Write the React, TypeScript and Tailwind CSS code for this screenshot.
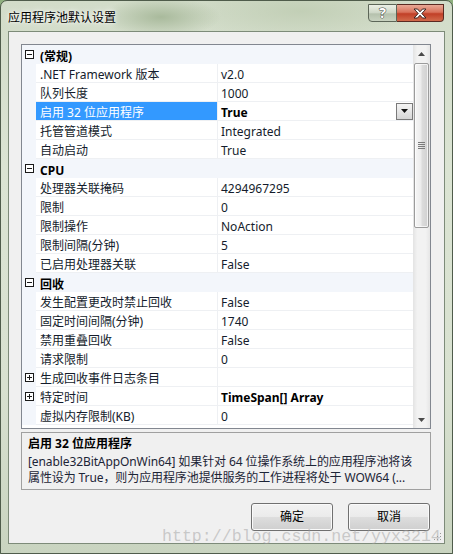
import React from "react";

type Row =
  | { type: "cat"; label: string }
  | { type: "prop"; name: string; value: string; selected?: boolean; bold?: boolean; expand?: boolean };

const rows: Row[] = [
  { type: "cat", label: "(常规)" },
  { type: "prop", name: ".NET Framework 版本", value: "v2.0" },
  { type: "prop", name: "队列长度", value: "1000" },
  { type: "prop", name: "启用 32 位应用程序", value: "True", selected: true, bold: true },
  { type: "prop", name: "托管管道模式", value: "Integrated" },
  { type: "prop", name: "自动启动", value: "True" },
  { type: "cat", label: "CPU" },
  { type: "prop", name: "处理器关联掩码", value: "4294967295" },
  { type: "prop", name: "限制", value: "0" },
  { type: "prop", name: "限制操作", value: "NoAction" },
  { type: "prop", name: "限制间隔(分钟)", value: "5" },
  { type: "prop", name: "已启用处理器关联", value: "False" },
  { type: "cat", label: "回收" },
  { type: "prop", name: "发生配置更改时禁止回收", value: "False" },
  { type: "prop", name: "固定时间间隔(分钟)", value: "1740" },
  { type: "prop", name: "禁用重叠回收", value: "False" },
  { type: "prop", name: "请求限制", value: "0" },
  { type: "prop", name: "生成回收事件日志条目", value: "", expand: true },
  { type: "prop", name: "特定时间", value: "TimeSpan[] Array", expand: true, bold: true },
  { type: "prop", name: "虚拟内存限制(KB)", value: "0" },
];

function Box({ plus }: { plus?: boolean }) {
  return (
    <svg width="9" height="9" viewBox="0 0 9 9" className="block">
      <rect x="0.5" y="0.5" width="8" height="8" fill="white" stroke="#1a1a1a" />
      <line x1="2" y1="4.5" x2="7" y2="4.5" stroke="#1a1a1a" />
      {plus && <line x1="4.5" y1="2" x2="4.5" y2="7" stroke="#1a1a1a" />}
    </svg>
  );
}

function DropButton() {
  return (
    <div className="ml-auto w-[17px] h-[17px] border border-[#7a7a7a] bg-[linear-gradient(180deg,#f4f4f4_0%,#e6e6e6_50%,#d6d6d6_100%)] flex items-center justify-center">
      <svg width="7" height="4" viewBox="0 0 7 4">
        <polygon points="0,0 7,0 3.5,4" fill="#111" />
      </svg>
    </div>
  );
}

function Scrollbar() {
  return (
    <div className="w-[17px] flex flex-col bg-[linear-gradient(90deg,#e3e3e3_0%,#f2f2f2_25%,#f2f2f2_75%,#e6e6e6_100%)]">
      <div className="h-[17px] flex items-center justify-center">
        <svg width="7" height="4" viewBox="0 0 7 4">
          <polygon points="0,4 7,4 3.5,0" fill="#4a4a4a" />
        </svg>
      </div>
      <div className="mt-[1px] mx-[1px] h-[165px] rounded-[2px] border border-[#9b9b9b] bg-[linear-gradient(90deg,#f6f6f6_0%,#ececec_45%,#dcdcdc_55%,#d0d0d0_100%)] shadow-[inset_0_0_0_1px_rgba(255,255,255,0.7)] flex flex-col items-center justify-center gap-[1px]">
        <div className="w-[7px] h-[1px] bg-[#7b7b7b]" />
        <div className="w-[7px] h-[1px] bg-[#7b7b7b]" />
        <div className="w-[7px] h-[1px] bg-[#7b7b7b]" />
        <div className="w-[7px] h-[1px] bg-[#7b7b7b]" />
      </div>
      <div className="flex-1" />
      <div className="h-[17px] flex items-center justify-center">
        <svg width="7" height="4" viewBox="0 0 7 4">
          <polygon points="0,0 7,0 3.5,4" fill="#4a4a4a" />
        </svg>
      </div>
    </div>
  );
}

function GridRow({ row }: { row: Row }) {
  if (row.type === "cat") {
    return (
      <div className="h-[19px] flex bg-[#f3f6fb]">
        <div className="w-[14px] flex items-center pl-[3px]">
          <Box />
        </div>
        <div className="pl-[4px] font-bold leading-[19px] text-black relative top-[2px]">{row.label}</div>
      </div>
    );
  }
  return (
    <div className="h-[19px] flex">
      <div className="w-[14px] bg-[#f3f6fb] flex items-center pl-[3px]">{row.expand && <Box plus />}</div>
      <div
        className={
          "w-[181px] border-b border-[#eef0f3] pl-[4px] whitespace-nowrap overflow-hidden " +
          (row.selected ? "bg-[#3399ff] text-white" : "text-[#141c2c]")
        }
      >
        <span className="block leading-[18px] relative top-[2px]">{row.name}</span>
      </div>
      <div className="w-[1px] bg-[#eef0f3]" />
      <div className="w-[195px] border-b border-[#eef0f3] pl-[3px] flex items-center whitespace-nowrap">
        <span
          className={
            (row.bold ? "font-bold text-black" : "text-[#141c2c]") + " leading-[18px] relative top-[2px]"
          }
        >
          {row.value}
        </span>
        {row.selected && <DropButton />}
      </div>
    </div>
  );
}

function Button({ label }: { label: string }) {
  return (
    <div className="w-[82px] h-[28px] rounded-[3px] border border-[#707070] bg-[linear-gradient(180deg,#f2f2f2_0%,#ebebeb_48%,#dddddd_52%,#cfcfcf_100%)] shadow-[inset_0_0_0_1px_#fafafa] flex items-center justify-center text-[12px] text-black">
      {label}
    </div>
  );
}

export default function App() {
  return (
    <div className="w-[453px] h-[554px] relative overflow-hidden bg-[#8fb07f] font-['Noto_Sans','Noto_Sans_CJK_SC',sans-serif] text-[12px]">
      <div className="w-full h-full flex flex-col rounded-t-[7px] border border-[#4f5c4b] bg-[radial-gradient(ellipse_60px_20px_at_160px_16px,#a9ba9c_0%,rgba(169,186,156,0)_100%),radial-gradient(ellipse_120px_30px_at_300px_10px,#c2cfb6_0%,rgba(194,207,182,0)_100%),linear-gradient(180deg,#d2dcc9_0%,#dbe4d3_30%,#d8e1d0_70%,#c9d4c0_100%)]">
        <div className="h-[30px] flex items-start pl-[7px] pr-[8px]">
          <span className="pt-[9px] leading-[16px] text-[12px] text-black [text-shadow:0_0_6px_rgba(255,255,255,0.95),0_0_3px_rgba(255,255,255,0.9)]">
            应用程序池默认设置
          </span>
          <div className="ml-auto mt-[3px] flex">
            <div className="w-[29px] h-[18px] rounded-bl-[4px] border border-[#5c6658] bg-[linear-gradient(180deg,rgba(240,244,236,0.85)_0%,rgba(205,214,198,0.85)_50%,rgba(178,190,170,0.9)_55%,rgba(200,210,192,0.9)_100%)] flex items-center justify-center text-white font-bold text-[14px] leading-none [-webkit-text-stroke:1px_#3a3f38] [paint-order:stroke_fill]">
              ?
            </div>
            <div className="w-[47px] h-[18px] rounded-br-[4px] border border-l-0 border-[#5a2a22] bg-[linear-gradient(180deg,#e8a996_0%,#d9725b_45%,#c13f27_55%,#d26b4c_100%)] flex items-center justify-center">
              <svg width="14" height="11" viewBox="0 0 14 11">
                <polygon
                  points="1,1 4.5,1 7,3.8 9.5,1 13,1 8.8,5.5 13,10 9.5,10 7,7.2 4.5,10 1,10 5.2,5.5"
                  fill="white"
                  stroke="#3b2420"
                  strokeWidth="1"
                  strokeLinejoin="round"
                />
              </svg>
            </div>
          </div>
        </div>
        <div className="flex-1 flex px-[7px] pb-[9px]">
          <div className="flex-1 border border-[#7d8b79] bg-[#f0f0f0] flex flex-col pl-[12px] pt-[12px] pr-[13px] relative">
            <div className="w-[410px] h-[385px] border border-[#828790] bg-white flex overflow-hidden">
              <div className="w-[391px] flex flex-col">
                {rows.map((r, i) => (
                  <GridRow key={i} row={r} />
                ))}
              </div>
              <Scrollbar />
            </div>
            <div className="mt-[3px] w-[410px] h-[58px] border border-[#a0a0a0] bg-[#f0f0f0] px-[6px] pt-[2px] overflow-hidden text-[#1c2436]">
              <div className="font-bold leading-[18px] text-black">启用 32 位应用程序</div>
              <div className="mt-[1px] leading-[16px] whitespace-nowrap tracking-[-0.1px]">[enable32BitAppOnWin64] 如果针对 64 位操作系统上的应用程序池将该</div>
              <div className="leading-[16px] whitespace-nowrap tracking-[-0.1px]">属性设为 True，则为应用程序池提供服务的工作进程将处于 WOW64 (...</div>
            </div>
            <div className="mt-[13px] flex justify-end gap-[15px] pr-[1px]">
              <Button label="确定" />
              <Button label="取消" />
            </div>
            <svg width="8" height="8" viewBox="0 0 8 8" className="absolute right-[2px] bottom-[2px]">
              <rect x="6" y="0" width="1" height="1" fill="#9a9a9a" />
              <rect x="3" y="3" width="1" height="1" fill="#9a9a9a" />
              <rect x="6" y="3" width="1" height="1" fill="#9a9a9a" />
              <rect x="0" y="6" width="1" height="1" fill="#9a9a9a" />
              <rect x="3" y="6" width="1" height="1" fill="#9a9a9a" />
              <rect x="6" y="6" width="1" height="1" fill="#9a9a9a" />
            </svg>
          </div>
        </div>
      </div>
      <div className="absolute left-[162px] top-[526px] font-['Liberation_Mono',monospace] text-[16.6px] leading-[22px] text-[rgba(160,160,160,0.5)] whitespace-nowrap">
        http://blog.csdn.net/yyx3214
      </div>
    </div>
  );
}
